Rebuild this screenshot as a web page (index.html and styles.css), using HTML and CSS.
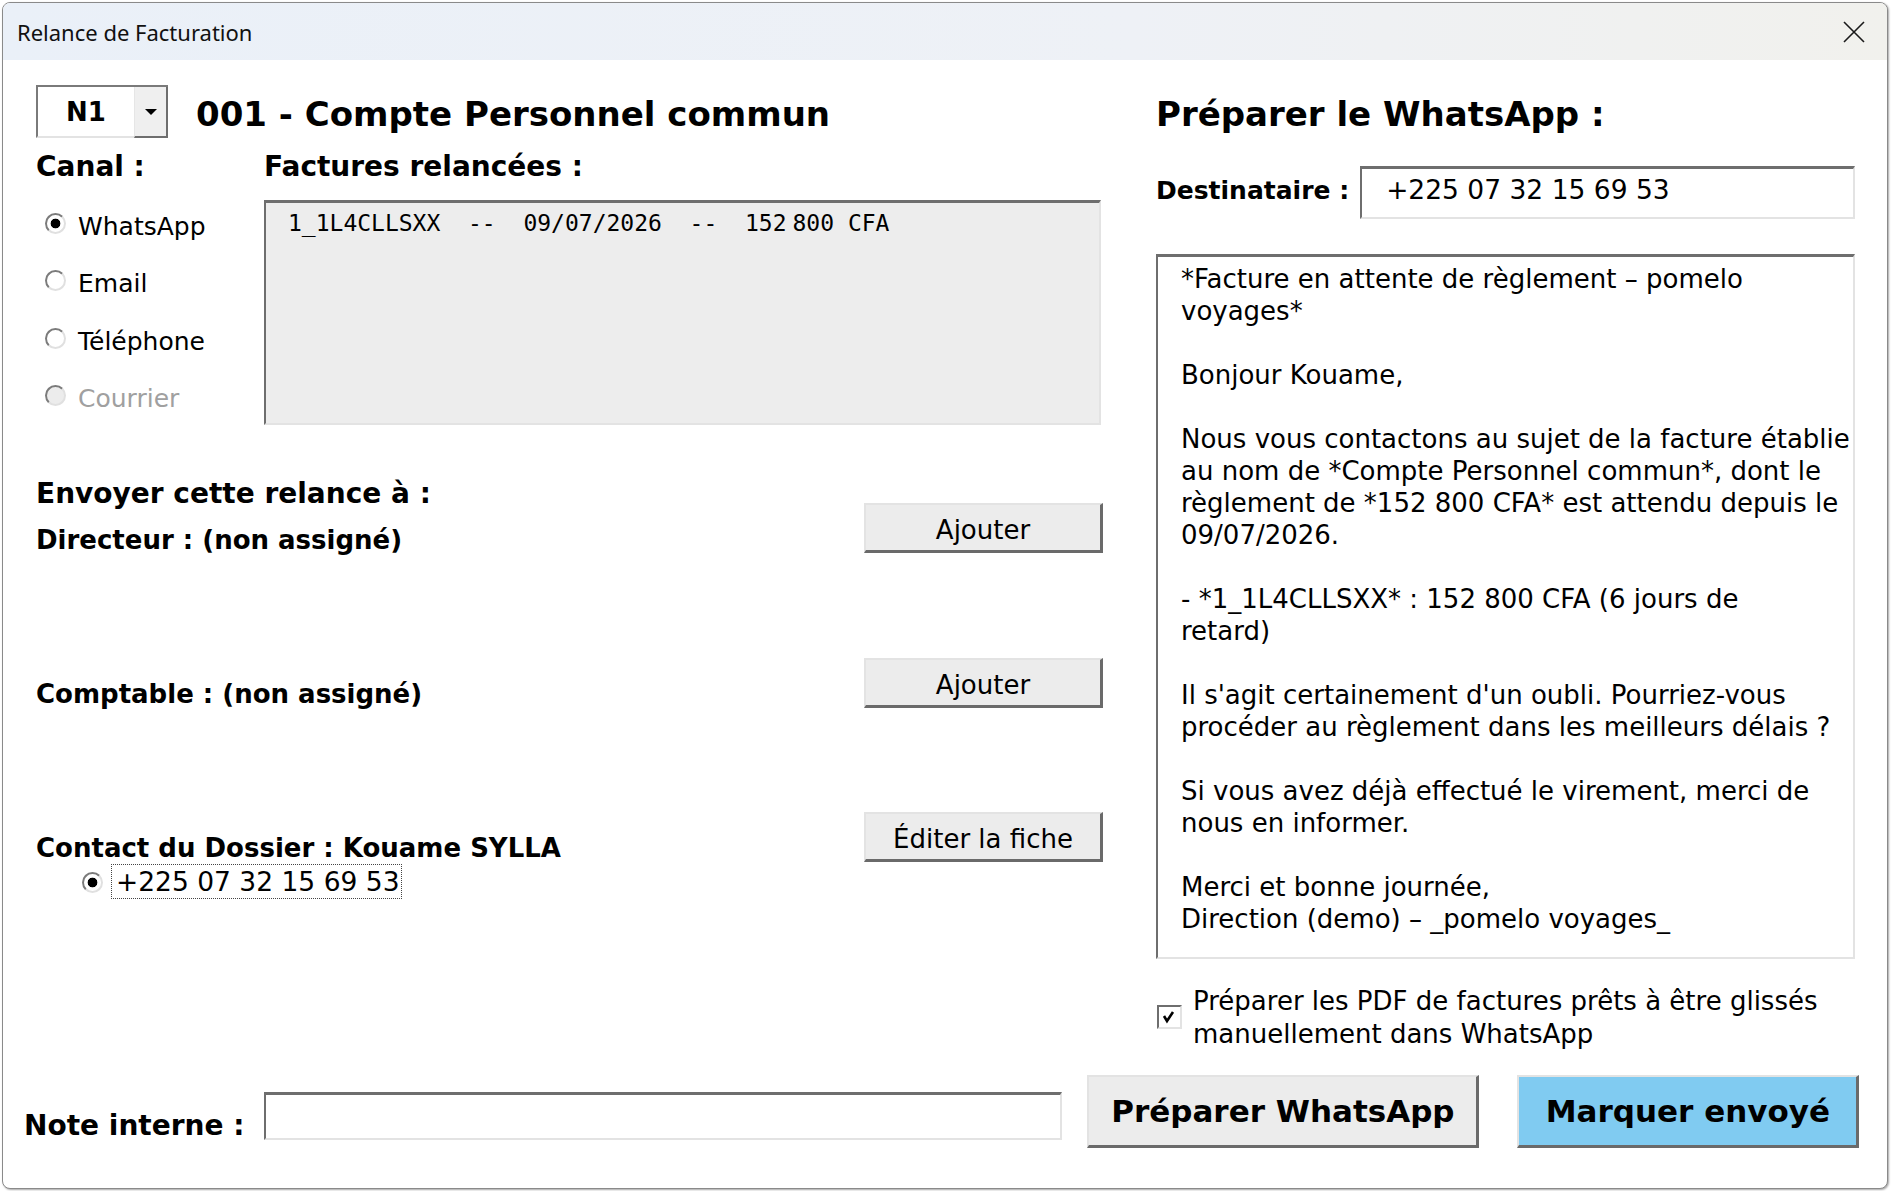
FILE: index.html
```html
<!DOCTYPE html>
<html lang="fr">
<head>
    <meta charset="UTF-8">
    <title>Relance de Facturation</title>
    <link rel="stylesheet" href="styles.css">
</head>
<body>
    <div class="window">
        <div class="titlebar">
            <span class="title">Relance de Facturation</span>
            <span class="close">
                <svg width="22" height="22" viewBox="0 0 22 22"><path d="M1 1 L21 21 M21 1 L1 21" stroke="#1a1a1a" stroke-width="1.6" fill="none"/></svg>
            </span>
        </div>

        <div class="content">
            <div class="columns">
                <div class="left">
                    <div class="head-row">
                        <div class="combo">
                            <span class="combo-value">N1</span>
                            <span class="combo-btn"><span class="arrow"></span></span>
                        </div>
                        <h1>001 - Compte Personnel commun</h1>
                    </div>

                    <div class="invoice-grid">
                        <h2>Canal :</h2>
                        <h2>Factures relancées :</h2>
                        <ul class="channels">
                            <li><span class="radio checked"></span>WhatsApp</li>
                            <li><span class="radio"></span>Email</li>
                            <li><span class="radio"></span>Téléphone</li>
                            <li class="disabled"><span class="radio"></span>Courrier</li>
                        </ul>
                        <div class="listbox">
                            <div class="list-item">1_1L4CLLSXX  --  09/07/2026  --  152<span class="thin"></span>800 CFA</div>
                        </div>
                    </div>

                    <div class="recipients">
                        <div class="recipients-text">
                            <h2>Envoyer cette relance à :</h2>
                            <p class="role role-first">Directeur : (non assigné)</p>
                            <p class="role">Comptable : (non assigné)</p>
                            <p class="role">Contact du Dossier : Kouame SYLLA</p>
                            <div class="contact-phone">
                                <span class="radio checked"></span>
                                <span class="focus-box">+225 07 32 15 69 53</span>
                            </div>
                        </div>
                        <div class="recipients-buttons">
                            <button class="btn btn-side">Ajouter</button>
                            <button class="btn btn-side">Ajouter</button>
                            <button class="btn btn-side">Éditer la fiche</button>
                        </div>
                    </div>
                </div>

                <div class="right">
                    <div class="head-row">
                        <h1>Préparer le WhatsApp :</h1>
                    </div>
                    <div class="dest-row">
                        <span class="dest-label">Destinataire :</span>
                        <div class="textbox dest-input">+225 07 32 15 69 53</div>
                    </div>
                    <div class="textbox message">*Facture en attente de règlement – pomelo<br>voyages*<br><br>Bonjour Kouame,<br><br>Nous vous contactons au sujet de la facture établie<br>au nom de *Compte Personnel commun*, dont le<br>règlement de *152 800 CFA* est attendu depuis le<br>09/07/2026.<br><br>- *1_1L4CLLSXX* : 152 800 CFA (6 jours de<br>retard)<br><br>Il s'agit certainement d'un oubli. Pourriez-vous<br>procéder au règlement dans les meilleurs délais ?<br><br>Si vous avez déjà effectué le virement, merci de<br>nous en informer.<br><br>Merci et bonne journée,<br>Direction (demo) – _pomelo voyages_</div>
                    <div class="pdf-check">
                        <span class="checkbox">
                            <svg width="14" height="14" viewBox="0 0 14 14"><path d="M2 6 L5 11 L11 2" stroke="#000" stroke-width="2.6" fill="none"/></svg>
                        </span>
                        <span class="pdf-label">Préparer les PDF de factures prêts à être glissés<br>manuellement dans WhatsApp</span>
                    </div>
                </div>
            </div>

            <div class="footer">
                <span class="note-label">Note interne :</span>
                <div class="textbox note-input"></div>
                <button class="btn btn-big">Préparer WhatsApp</button>
                <button class="btn btn-big btn-blue">Marquer envoyé</button>
            </div>
        </div>
    </div>
</body>
</html>
```

FILE: styles.css
```css
body {
    margin: 0;
    background: #fff;
    font-family: "DejaVu Sans", Verdana, sans-serif;
    color: #000;
}

.window {
    margin: 2px;
    width: 1886px;
    height: 1187px;
    box-sizing: border-box;
    border: 1px solid #8a8a8a;
    border-radius: 8px;
    box-shadow: 1px 1px 2px rgba(0, 0, 0, 0.35);
    overflow: hidden;
    display: flex;
    flex-direction: column;
    background: #fff;
}

.titlebar {
    height: 57px;
    flex: none;
    display: flex;
    align-items: center;
    justify-content: space-between;
    padding-left: 14px;
    background: linear-gradient(90deg, #eaf0f8 0%, #eef1f6 60%, #f1f1ed 100%);
}

.title {
    font-family: "Noto Sans", sans-serif;
    font-size: 22px;
    color: #111;
}

.close {
    width: 46px;
    height: 100%;
    margin-right: 10px;
    display: flex;
    align-items: center;
    justify-content: center;
}

.content {
    flex: 1;
    display: flex;
    flex-direction: column;
    padding: 25px 0 0 33px;
}

.columns {
    display: flex;
}

.left {
    width: 1067px;
}

.right {
    width: 699px;
    margin-left: 53px;
}

.head-row {
    height: 53px;
    display: flex;
    align-items: center;
    gap: 28px;
}

h1 {
    margin: 4px 0 0;
    font-size: 34px;
    line-height: 34px;
    font-weight: bold;
    white-space: nowrap;
}

h2 {
    margin: 0;
    font-size: 28px;
    line-height: 32px;
    font-weight: bold;
    white-space: nowrap;
}

/* combobox N1 */
.combo {
    width: 132px;
    height: 53px;
    box-sizing: border-box;
    display: flex;
    border-top: 2px solid #7a7a7a;
    border-left: 2px solid #7a7a7a;
    border-bottom: 2px solid #e3e3e3;
    background: #fff;
    flex: none;
}

.combo-value {
    flex: 1;
    display: flex;
    align-items: center;
    justify-content: center;
    font-size: 26px;
    font-weight: bold;
}

.combo-btn {
    width: 34px;
    margin-bottom: -2px;
    box-sizing: border-box;
    background: #efefef;
    border-left: 1px solid #e6e6e6;
    border-right: 2px solid #6e6e6e;
    border-bottom: 2px solid #6e6e6e;
    display: flex;
    align-items: center;
    justify-content: center;
}

.arrow {
    width: 0;
    height: 0;
    border-left: 6px solid transparent;
    border-right: 6px solid transparent;
    border-top: 6px solid #000;
}

/* canal + factures */
.invoice-grid {
    display: grid;
    grid-template-columns: 228px 837px;
    grid-template-rows: 32px 225px;
    row-gap: 17px;
    margin-top: 13px;
}

.channels {
    list-style: none;
    margin: 11px 0 0 9px;
    padding: 0;
}

.channels li {
    height: 57.3px;
    display: flex;
    align-items: flex-start;
    gap: 12px;
    font-size: 25px;
    line-height: 32px;
}

.channels li .radio {
    margin-top: 2px;
}

.channels li.disabled {
    color: #a0a0a0;
}

.channels li.disabled .radio {
    background: #ececec;
}

.radio {
    flex: none;
    width: 21px;
    height: 21px;
    box-sizing: border-box;
    border-radius: 50%;
    border: 2px solid;
    border-color: #7b7b7b #e0e0e0 #e0e0e0 #7b7b7b;
    background: #fff;
}

.radio.checked {
    background: radial-gradient(circle, #000 0 4.5px, #fff 5.2px);
}

.listbox {
    height: 225px;
    box-sizing: border-box;
    background: #ededed;
    border-top: 3px solid #6e6e6e;
    border-left: 2px solid #6e6e6e;
    border-right: 2px solid #e3e3e3;
    border-bottom: 2px solid #e3e3e3;
    padding: 4px 0 0 22px;
}

.list-item {
    font-family: "DejaVu Sans Mono", "Liberation Mono", monospace;
    font-size: 23px;
    line-height: 32px;
    white-space: pre;
}

.thin {
    display: inline-block;
    width: 6px;
}

/* destinataires */
.recipients {
    display: flex;
    justify-content: space-between;
    margin-top: 53px;
}

.role {
    margin: 122px 0 0;
    font-size: 26px;
    line-height: 32px;
    font-weight: bold;
    white-space: nowrap;
}

.role.role-first {
    margin-top: 13.5px;
}

.contact-phone {
    display: flex;
    align-items: flex-start;
    margin-left: 46px;
}

.contact-phone .radio {
    margin-top: 8px;
}

.focus-box {
    margin-left: 8px;
    height: 35px;
    box-sizing: border-box;
    border: 1px dotted #444;
    padding: 0 1px 0 4px;
    font-size: 26.5px;
    line-height: 33px;
    white-space: nowrap;
}

.recipients-buttons {
    display: flex;
    flex-direction: column;
    margin-top: 25px;
}

.btn {
    font-family: "DejaVu Sans", Verdana, sans-serif;
    color: #000;
    background: #ececec;
    border-style: solid;
    border-width: 2px 3px 3px 2px;
    border-color: #e3e3e3 #6a6a6a #6a6a6a #e3e3e3;
    padding: 0;
    cursor: pointer;
}

.btn-side {
    width: 239px;
    height: 50px;
    padding-top: 5px;
    font-size: 26px;
}

.btn-side + .btn-side {
    margin-top: 104.5px;
}

/* colonne WhatsApp */
.dest-row {
    display: flex;
    align-items: center;
    gap: 11px;
    margin-top: 28px;
}

.dest-label {
    font-size: 25px;
    font-weight: bold;
    white-space: nowrap;
    margin-top: -4px;
}

.textbox {
    box-sizing: border-box;
    background: #fff;
    border-top: 3px solid #6e6e6e;
    border-left: 2px solid #6e6e6e;
    border-right: 2px solid #e3e3e3;
    border-bottom: 2px solid #e3e3e3;
}

.dest-input {
    flex: 1;
    height: 53px;
    padding-left: 24px;
    font-size: 26.5px;
    line-height: 42px;
}

.message {
    margin-top: 35px;
    height: 705px;
    padding: 6px 0 0 23px;
    font-size: 26px;
    line-height: 32px;
    white-space: nowrap;
    overflow: hidden;
}

.pdf-check {
    display: flex;
    align-items: center;
    gap: 11px;
    margin-top: 26px;
    margin-left: 1px;
}

.checkbox {
    flex: none;
    width: 25px;
    height: 24px;
    box-sizing: border-box;
    background: #fff;
    border-top: 2px solid #6e6e6e;
    border-left: 2px solid #6e6e6e;
    border-right: 2px solid #e3e3e3;
    border-bottom: 2px solid #e3e3e3;
    display: flex;
    align-items: center;
    padding-left: 3px;
    margin-top: -2px;
}

.pdf-label {
    font-size: 26px;
    line-height: 33px;
    white-space: nowrap;
}

/* bas de fenêtre */
.footer {
    display: flex;
    align-items: flex-start;
    margin-top: auto;
    margin-bottom: 40px;
    margin-left: -12px;
}

.note-label {
    margin-top: 35px;
    font-size: 28px;
    line-height: 32px;
    font-weight: bold;
    white-space: nowrap;
}

.note-input {
    width: 798px;
    height: 48px;
    margin: 17px 0 0 20px;
}

.btn-big {
    height: 73px;
    font-size: 31px;
    font-weight: bold;
}

.note-input + .btn-big {
    width: 392px;
    margin-left: 25px;
}

.btn-blue {
    width: 342px;
    margin-left: 38px;
    background: #80cbf1;
}
```
